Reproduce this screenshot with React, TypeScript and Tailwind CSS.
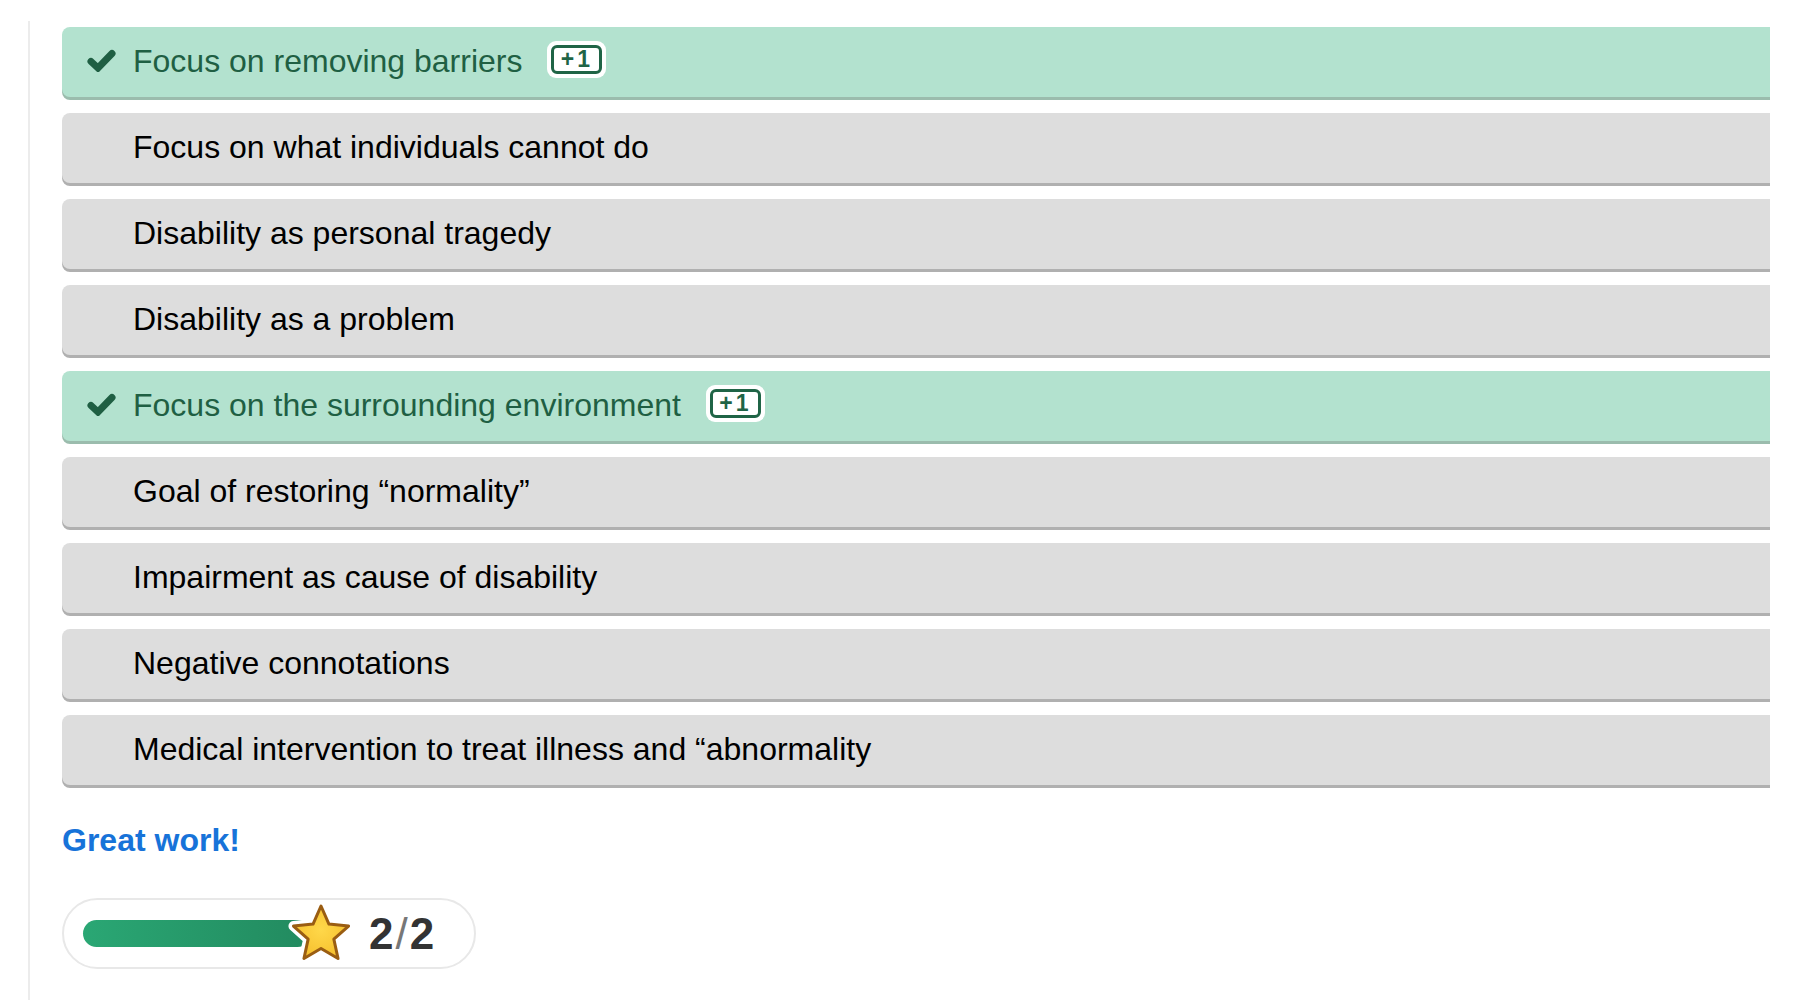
type Option = {
    label: string;
    correct?: boolean;
};

const options: Option[] = [
    { label: "Focus on removing barriers", correct: true },
    { label: "Focus on what individuals cannot do" },
    { label: "Disability as personal tragedy" },
    { label: "Disability as a problem" },
    { label: "Focus on the surrounding environment", correct: true },
    { label: "Goal of restoring \u201cnormality\u201d" },
    { label: "Impairment as cause of disability" },
    { label: "Negative connotations" },
    { label: "Medical intervention to treat illness and \u201cabnormality" },
];

function CheckMark() {
    return (
        <svg width="29" height="23" viewBox="0 0 29 23" className="shrink-0">
            <polyline
                points="4,12.5 11,19 25,4.5"
                fill="none"
                stroke="#1f5f43"
                strokeWidth="7"
                strokeLinecap="round"
                strokeLinejoin="miter"
            />
        </svg>
    );
}

function PointBadge() {
    return (
        <span className="relative -top-[3px] ml-[25px] inline-flex rounded-[9px] bg-white p-[4px]">
            <span className="flex h-[29px] w-[51px] items-center justify-center rounded-[6px] border-[3px] border-[#1f6446] text-[23px] font-bold leading-none tracking-[3px] text-[#1f6446]">
                +1
            </span>
        </span>
    );
}

function OptionRow({ option }: { option: Option }) {
    const done = option.correct;
    return (
        <div
            className={`flex h-[70px] items-center rounded-l-[8px] pl-[25px] ${done
                ? "bg-[#b3e2cf] text-[#1f5f43] shadow-[0_3px_0_#9bbcad]"
                : "bg-[#dddddd] text-black shadow-[0_3px_0_#b0b0b0]"
                }`}
        >
            <span className="-mt-[3px] flex w-[46px] shrink-0 items-center">
                {done && <CheckMark />}
            </span>
            <span className="-mt-[2px] text-[32px] leading-none">{option.label}</span>
            {done && <PointBadge />}
        </div>
    );
}

function Star() {
    const pts: string[] = [];
    for (let i = 0; i < 10; i++) {
        const r = i % 2 === 0 ? 29 : 13.5;
        const a = (Math.PI / 5) * i - Math.PI / 2;
        pts.push(`${(36 + r * Math.cos(a)).toFixed(2)},${(37 + r * Math.sin(a)).toFixed(2)}`);
    }
    const p = pts.join(" ");
    return (
        <svg width="72" height="72" viewBox="0 0 72 72" className="-ml-[26px] shrink-0">
            <defs>
                <radialGradient id="starFill" cx="50%" cy="45%" r="60%">
                    <stop offset="0%" stopColor="#ffd84a" />
                    <stop offset="100%" stopColor="#f5be2c" />
                </radialGradient>
            </defs>
            <polygon points={p} fill="white" stroke="white" strokeWidth="10" strokeLinejoin="round" />
            <polygon points={p} fill="url(#starFill)" stroke="#9a5d12" strokeWidth="3" strokeLinejoin="round" />
        </svg>
    );
}

export default function App() {
    return (
        <div className="min-h-[1000px] bg-white pt-[21px] font-['Liberation_Sans',Arial,sans-serif]">
            <div className="ml-[28px] min-h-[979px] border-l-2 border-[#ececec] pl-[32px] pt-[6px] pr-[24px]">
                <div className="flex flex-col gap-[16px]">
                    {options.map((o) => (
                        <OptionRow key={o.label} option={o} />
                    ))}
                </div>

                <div className="mt-[36px] text-[32px] font-bold leading-[1.2] text-[#1773d9]">Great work!</div>

                <div className="mt-[39px] flex h-[71px] w-[414px] items-center rounded-full border-2 border-[#e8e8e8] pl-[19px]">
                    <div className="h-[27px] w-[228px] rounded-full bg-gradient-to-r from-[#2aa774] to-[#228a5f]" />
                    <Star />
                    <span className="ml-[12px] text-[44px] font-bold leading-none tracking-[2px] text-[#333333]">
                        2<span className="font-normal text-[#777777]">/</span>2
                    </span>
                </div>
            </div>
        </div>
    );
}
